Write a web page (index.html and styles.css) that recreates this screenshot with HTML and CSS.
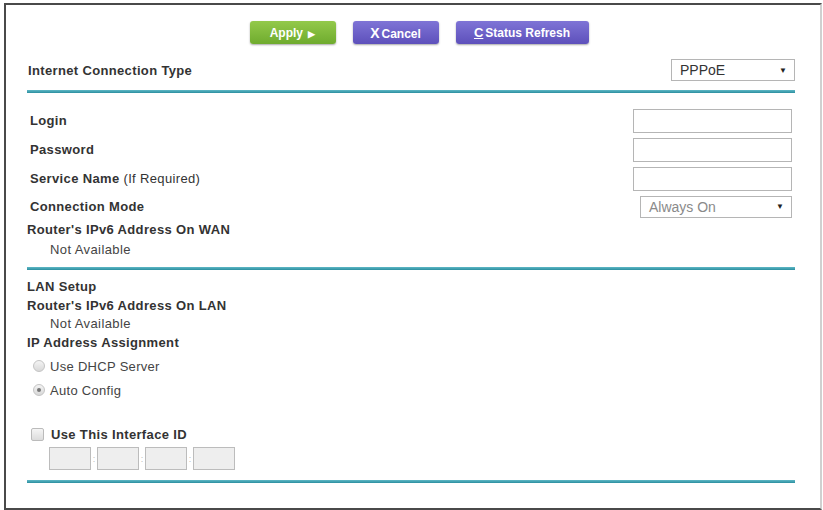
FILE: index.html
```html
<!DOCTYPE html>
<html lang="en">
<head>
    <meta charset="UTF-8">
    <meta name="viewport" content="width=device-width, initial-scale=1.0">
    <title>IPv6 PPPoE Setup</title>
    <link rel="stylesheet" href="styles.css">
</head>
<body>

<div class="frame">
    <div class="buttons">
        <button class="btn apply-btn">Apply <span class="tri">&#9654;</span></button>
        <button class="btn purple-btn"><span class="ico-x">X</span>Cancel</button>
        <button class="btn purple-btn refresh-btn"><span class="ico-c">C</span>Status Refresh</button>
    </div>

    <div class="section">
        <div class="type-row">
            <span class="label">Internet Connection Type</span>
            <div class="select type-select"><span>PPPoE</span><span class="arrow">&#9660;</span></div>
        </div>
        <div class="rule"></div>

        <div class="wan">
            <div class="form-row">
                <span class="label indent">Login</span>
                <input type="text" class="field">
            </div>
            <div class="form-row">
                <span class="label indent">Password</span>
                <input type="password" class="field">
            </div>
            <div class="form-row">
                <span class="label indent">Service Name <span class="plain">(If Required)</span></span>
                <input type="text" class="field">
            </div>
            <div class="form-row mode-row">
                <span class="label indent">Connection Mode</span>
                <div class="select mode-select"><span>Always On</span><span class="arrow">&#9660;</span></div>
            </div>
            <div class="line label">Router's IPv6 Address On WAN</div>
            <div class="line value">Not Available</div>
        </div>
        <div class="rule"></div>

        <div class="lan">
            <div class="line2 label">LAN Setup</div>
            <div class="line2 label">Router's IPv6 Address On LAN</div>
            <div class="line2 value">Not Available</div>
            <div class="line2 label">IP Address Assignment</div>
            <div class="choices">
                <div class="choice"><span class="radio"></span>Use DHCP Server</div>
                <div class="choice"><span class="radio on"></span>Auto Config</div>
            </div>

            <div class="check-row"><span class="checkbox"></span><span class="label">Use This Interface ID</span></div>
            <div class="iface">
                <span class="box"></span><span class="sep">:</span>
                <span class="box"></span><span class="sep">:</span>
                <span class="box"></span><span class="sep">:</span>
                <span class="box"></span>
            </div>
        </div>
        <div class="rule last"></div>
    </div>
</div>

</body>
</html>
```

FILE: styles.css
```css
body {
    margin: 0;
    font-family: "Liberation Sans", Arial, sans-serif;
    background: #fff;
    color: #333;
}
.frame {
    margin: 3px 1px 0 4px;
    height: 507px;
    box-sizing: border-box;
    border: 2px solid #4a4a4a;
    border-right-color: #d0d0d0;
    background: #fff;
}
.buttons {
    display: flex;
    justify-content: center;
    gap: 17px;
    padding: 16px 0 0 12px;
}
.btn {
    height: 23px;
    border: none;
    border-radius: 3px;
    color: #fff;
    font-family: inherit;
    font-weight: bold;
    font-size: 12px;
    padding: 0;
    box-shadow: 0 1px 2px rgba(0, 0, 0, 0.35);
}
.apply-btn {
    width: 86px;
    background: linear-gradient(#93c94a, #6fab2e);
}
.tri {
    font-size: 9px;
    margin-left: 2px;
}
.purple-btn {
    width: 86px;
    background: linear-gradient(#7f74d6, #5d50bb);
}
.refresh-btn {
    width: 133px;
}
.ico-x {
    font-size: 14px;
    margin-right: 2px;
}
.ico-c {
    font-size: 13px;
    margin-right: 2px;
    text-decoration: underline;
}
.section {
    padding: 0 25px 0 21px;
}
.type-row {
    display: flex;
    justify-content: space-between;
    align-items: center;
    height: 26px;
    margin-top: 13px;
    padding-left: 1px;
}
.label {
    font-weight: bold;
    font-size: 13px;
    letter-spacing: 0.35px;
    color: #333;
}
.plain {
    font-weight: normal;
}
.indent {
    padding-left: 3px;
}
.select {
    display: flex;
    justify-content: space-between;
    align-items: center;
    box-sizing: border-box;
    height: 22px;
    border: 1px solid #b5b5b5;
    font-size: 14px;
    padding: 0 7px 0 8px;
    background: #fff;
}
.type-select {
    width: 124px;
    color: #333;
}
.mode-select {
    width: 152px;
    color: #8a8a8a;
    margin-right: 3px;
}
.arrow {
    font-size: 8px;
    color: #222;
}
.rule {
    height: 3px;
    background: linear-gradient(#5fb8c6, #2b8e9f);
    margin-top: 7px;
}
.rule.last {
    margin-top: 10px;
}
.wan {
    padding-top: 13px;
}
.form-row {
    display: flex;
    justify-content: space-between;
    align-items: center;
    height: 29px;
}
.mode-row {
    height: 27px;
}
.field {
    box-sizing: border-box;
    width: 159px;
    height: 24px;
    margin-right: 3px;
    border: 1px solid #b5b5b5;
    font-family: inherit;
}
.line {
    height: 20px;
    line-height: 20px;
}
.value {
    font-size: 13px;
    font-weight: normal;
    letter-spacing: 0.4px;
    padding-left: 23px;
    color: #444;
}
.lan {
    padding-top: 8px;
}
.line2 {
    height: 18.5px;
    line-height: 18.5px;
}
.choices {
    margin-top: 2px;
}
.choice {
    display: flex;
    align-items: center;
    height: 24px;
    font-size: 13px;
    letter-spacing: 0.3px;
    color: #444;
    padding-left: 6px;
}
.radio {
    width: 10px;
    height: 10px;
    border-radius: 50%;
    border: 1px solid #c4c4c4;
    background: linear-gradient(#f4f4f4, #d8d8d8);
    margin-right: 5px;
    position: relative;
}
.radio.on::after {
    content: "";
    position: absolute;
    left: 3px;
    top: 3px;
    width: 4px;
    height: 4px;
    border-radius: 50%;
    background: #777;
}
.check-row {
    display: flex;
    align-items: center;
    margin-top: 22px;
    height: 20px;
    padding-left: 4px;
}
.checkbox {
    width: 11px;
    height: 11px;
    border: 1px solid #bbb;
    border-radius: 2px;
    background: linear-gradient(#f5f5f5, #dcdcdc);
    margin-right: 7px;
}
.iface {
    display: flex;
    align-items: center;
    padding-left: 22px;
    margin-top: 3px;
}
.box {
    width: 42px;
    height: 23px;
    box-sizing: border-box;
    border: 1px solid #bcbcbc;
    background: #eeeeee;
}
.sep {
    width: 6px;
    text-align: center;
    font-size: 9px;
    color: #bbb;
}
```
